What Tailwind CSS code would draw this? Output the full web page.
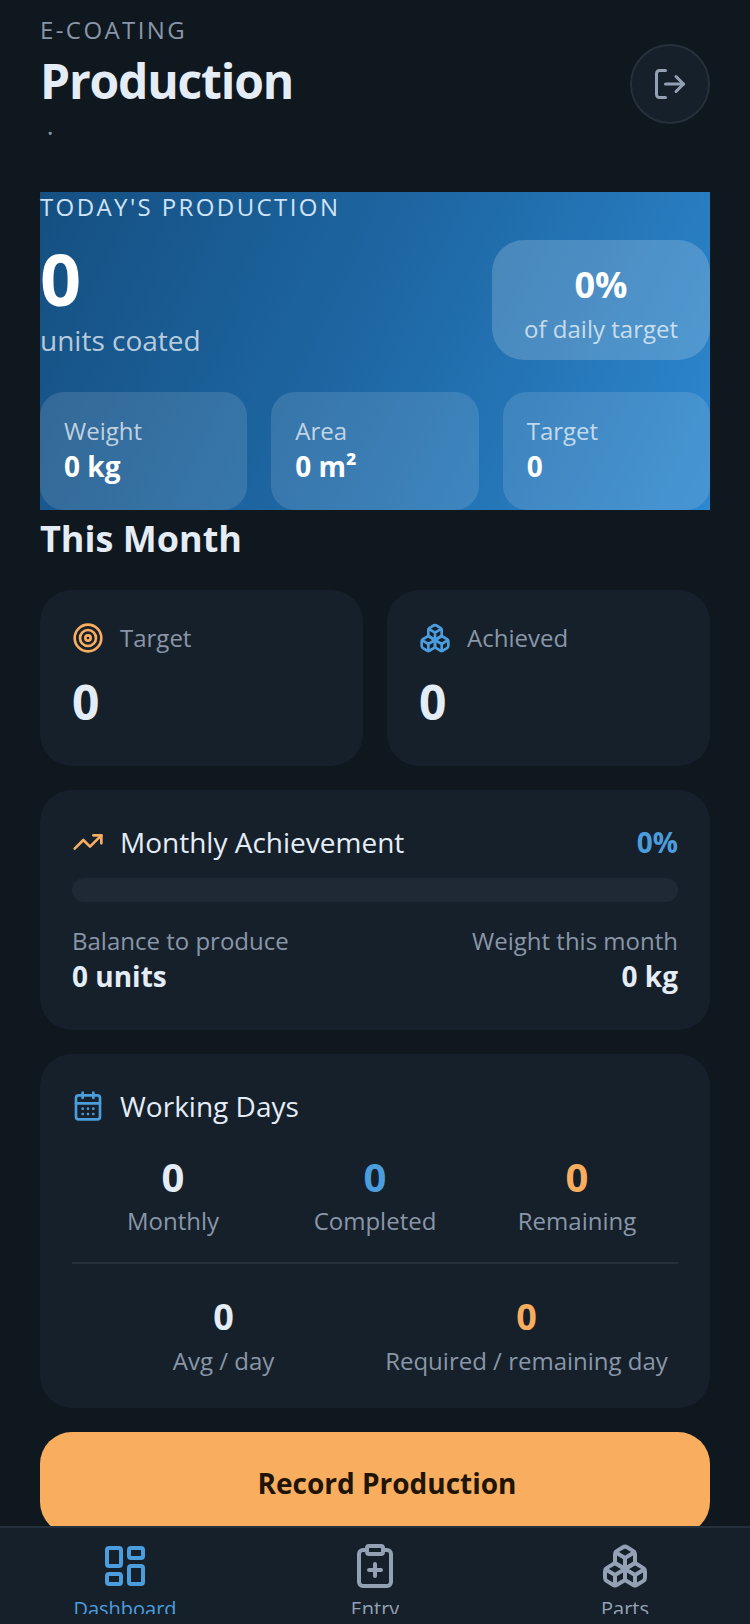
<!DOCTYPE html>
<html lang="en">
<head>
  <meta charset="UTF-8">
  <title>Production - E-Coating</title>
  <meta name="viewport" content="width=device-width, initial-scale=1.0">
  <script src="https://cdn.jsdelivr.net/npm/@tailwindcss/browser@4"></script>
</head>
<body class="bg-[#0f171f] text-[#e4ecf6] font-['Open_Sans','Noto_Sans',sans-serif]">

<!-- Shared icon -->
<svg class="hidden">
  <symbol id="icon-boxes" viewBox="0 0 24 24">
    <path d="M2.97 12.92A2 2 0 0 0 2 14.63v3.24a2 2 0 0 0 .97 1.71l3 1.8a2 2 0 0 0 2.06 0L12 19v-5.5l-5-3-4.03 2.42Z" />
    <path d="m7 16.5-4.74-2.85M7 16.5l5-3M7 16.5v5.17" />
    <path d="M12 13.5V19l3.97 2.38a2 2 0 0 0 2.06 0l3-1.8a2 2 0 0 0 .97-1.71v-3.24a2 2 0 0 0-.97-1.71L17 10.5l-5 3Z" />
    <path d="m17 16.5-5-3M17 16.5l4.74-2.85M17 16.5v5.17" />
    <path d="M7.97 4.42A2 2 0 0 0 7 6.13v4.37l5 3 5-3V6.13a2 2 0 0 0-.97-1.71l-3-1.8a2 2 0 0 0-2.06 0l-3 1.8Z" />
    <path d="M12 8 7.26 5.15M12 8l4.74-2.85M12 13.5V8" />
  </symbol>
</svg>

<div class="flex flex-col h-screen">

  <main class="flex-1 min-h-0 overflow-y-auto [scrollbar-width:none] px-10 pb-10">

    <!-- Header -->
    <header class="flex justify-between items-center pt-[14px] pb-[38px]">
      <div class="pb-[6px]">
        <p class="text-2xl leading-8 tracking-widest text-[#8996a7]">E-COATING</p>
        <h1 class="text-5xl leading-[70px] font-bold tracking-tight">Production</h1>
        <p class="text-[26px] leading-8 text-[#8996a7]">&nbsp;·</p>
      </div>
      <button type="button" aria-label="Log out" class="flex items-center justify-center w-20 h-20 rounded-full border-2 border-[#25303b] bg-[#16202b] text-[#94a1b4]">
        <svg class="w-9 h-9" fill="none" stroke="currentColor" stroke-width="2" stroke-linecap="round" stroke-linejoin="round" viewBox="0 0 24 24">
          <path d="m16 17 5-5-5-5" />
          <path d="M21 12H9" />
          <path d="M9 21H5a2 2 0 0 1-2-2V5a2 2 0 0 1 2-2h4" />
        </svg>
      </button>
    </header>

    <!-- Today's production -->
    <section class="bg-linear-115 from-[#154f81] via-[#1e68a5] to-[#2e88cf] text-white">
      <h2 class="text-2xl leading-[30px] tracking-widest text-[#cfe3f5]">TODAY'S PRODUCTION</h2>
      <div class="flex justify-between items-center mt-[18px]">
        <div>
          <p class="text-7xl leading-[76px] font-bold">0</p>
          <p class="mt-1 text-[28px] leading-10 text-white/70">units coated</p>
        </div>
        <div class="rounded-[32px] bg-white/18 px-8 py-4 text-center">
          <p class="text-4xl leading-[58px] font-bold">0%</p>
          <p class="text-2xl leading-[30px] text-white/70">of daily target</p>
        </div>
      </div>
      <div class="grid grid-cols-3 gap-6 mt-8">
        <div class="rounded-3xl bg-white/12 p-6">
          <p class="text-2xl leading-[30px] text-white/70">Weight</p>
          <p class="text-[28px] leading-10 font-bold">0 kg</p>
        </div>
        <div class="rounded-3xl bg-white/12 p-6">
          <p class="text-2xl leading-[30px] text-white/70">Area</p>
          <p class="text-[28px] leading-10 font-bold">0 m²</p>
        </div>
        <div class="rounded-3xl bg-white/12 p-6">
          <p class="text-2xl leading-[30px] text-white/70">Target</p>
          <p class="text-[28px] leading-10 font-bold">0</p>
        </div>
      </div>
    </section>

    <!-- This month -->
    <h2 class="text-4xl leading-[58px] font-bold">This Month</h2>

    <div class="grid grid-cols-2 gap-6 mt-[22px]">
      <section class="rounded-[32px] bg-[#16202b] p-8">
        <div class="flex items-center gap-4">
          <svg class="w-8 h-8 text-[#f8ad5f]" fill="none" stroke="currentColor" stroke-width="2" viewBox="0 0 24 24">
            <circle cx="12" cy="12" r="10" />
            <circle cx="12" cy="12" r="6" />
            <circle cx="12" cy="12" r="2" />
          </svg>
          <h3 class="text-2xl leading-8 text-[#8996a7]">Target</h3>
        </div>
        <p class="mt-4 text-5xl leading-[64px] font-bold">0</p>
      </section>
      <section class="rounded-[32px] bg-[#16202b] p-8">
        <div class="flex items-center gap-4">
          <svg class="w-8 h-8 text-[#4b9ddd]" fill="none" stroke="currentColor" stroke-width="2" stroke-linecap="round" stroke-linejoin="round">
            <use href="#icon-boxes" />
          </svg>
          <h3 class="text-2xl leading-8 text-[#8996a7]">Achieved</h3>
        </div>
        <p class="mt-4 text-5xl leading-[64px] font-bold">0</p>
      </section>
    </div>

    <!-- Monthly achievement -->
    <section class="mt-6 rounded-[32px] bg-[#16202b] p-8">
      <div class="flex items-center gap-4">
        <svg class="w-8 h-8 text-[#f8ad5f]" fill="none" stroke="currentColor" stroke-width="2" stroke-linecap="round" stroke-linejoin="round" viewBox="0 0 24 24">
          <path d="M16 7h6v6" />
          <path d="m22 7-8.5 8.5-5-5L2 17" />
        </svg>
        <h3 class="flex-1 text-[28px] leading-10">Monthly Achievement</h3>
        <span class="text-[28px] leading-10 font-bold text-[#4b9ddd]">0%</span>
      </div>
      <div class="mt-4 h-6 rounded-full bg-[#1e2935] overflow-hidden">
        <div class="h-full bg-[#4b9ddd]" style="width: 0%"></div>
      </div>
      <div class="flex justify-between mt-6 pb-[2px]">
        <div>
          <p class="text-2xl leading-[30px] text-[#8996a7]">Balance to produce</p>
          <p class="text-[28px] leading-10 font-bold">0 units</p>
        </div>
        <div class="text-right">
          <p class="text-2xl leading-[30px] text-[#8996a7]">Weight this month</p>
          <p class="text-[28px] leading-10 font-bold">0 kg</p>
        </div>
      </div>
    </section>

    <!-- Working days -->
    <section class="mt-6 rounded-[32px] bg-[#16202b] p-8">
      <div class="flex items-center gap-4">
        <svg class="w-8 h-8 text-[#4b9ddd]" fill="none" stroke="currentColor" stroke-width="2" stroke-linecap="round" stroke-linejoin="round" viewBox="0 0 24 24">
          <path d="M8 2v4M16 2v4" />
          <rect width="18" height="18" x="3" y="4" rx="2" />
          <path d="M3 10h18" />
          <path d="M8 14h.01M12 14h.01M16 14h.01M8 18h.01M12 18h.01M16 18h.01" />
        </svg>
        <h3 class="text-[28px] leading-10">Working Days</h3>
      </div>
      <div class="grid grid-cols-3 mt-6 pb-6 text-center">
        <div>
          <p class="text-[40px] leading-[54px] font-bold">0</p>
          <p class="text-2xl leading-[34px] text-[#8996a7]">Monthly</p>
        </div>
        <div>
          <p class="text-[40px] leading-[54px] font-bold text-[#4b9ddd]">0</p>
          <p class="text-2xl leading-[34px] text-[#8996a7]">Completed</p>
        </div>
        <div>
          <p class="text-[40px] leading-[54px] font-bold text-[#f8ad5f]">0</p>
          <p class="text-2xl leading-[34px] text-[#8996a7]">Remaining</p>
        </div>
      </div>
      <div class="grid grid-cols-2 border-t-2 border-[#25303b] pt-6 text-center">
        <div>
          <p class="text-4xl leading-[58px] font-bold">0</p>
          <p class="text-2xl leading-[30px] text-[#8996a7]">Avg / day</p>
        </div>
        <div>
          <p class="text-4xl leading-[58px] font-bold text-[#f8ad5f]">0</p>
          <p class="text-2xl leading-[30px] text-[#8996a7]">Required / remaining day</p>
        </div>
      </div>
    </section>

    <button type="button" class="mt-6 w-full rounded-[32px] bg-[#f8ad5f] py-8 pl-6 text-[28px] leading-[38px] font-bold text-[#201405]">Record Production</button>
  </main>

  <!-- Bottom tabs -->
  <nav class="grid grid-cols-3 border-t-2 border-[#25303b] bg-[#16202b] pt-[14px] pb-[10px] text-xl leading-[30px] text-[#94a1b4]">
    <a href="#" class="flex flex-col items-center text-[#4b9ddd]">
      <svg class="w-12 h-12" fill="none" stroke="currentColor" stroke-width="2" stroke-linecap="round" stroke-linejoin="round" viewBox="0 0 24 24">
        <rect width="7" height="9" x="3" y="3" rx="1" />
        <rect width="7" height="5" x="14" y="3" rx="1" />
        <rect width="7" height="9" x="14" y="12" rx="1" />
        <rect width="7" height="5" x="3" y="16" rx="1" />
      </svg>
      <span class="mt-1 h-5 overflow-hidden">Dashboard</span>
    </a>
    <a href="#" class="flex flex-col items-center">
      <svg class="w-12 h-12" fill="none" stroke="currentColor" stroke-width="2" stroke-linecap="round" stroke-linejoin="round" viewBox="0 0 24 24">
        <rect width="8" height="4" x="8" y="2" rx="1" />
        <path d="M16 4h2a2 2 0 0 1 2 2v14a2 2 0 0 1-2 2H6a2 2 0 0 1-2-2V6a2 2 0 0 1 2-2h2" />
        <path d="M9 14h6M12 17v-6" />
      </svg>
      <span class="mt-1 h-5 overflow-hidden">Entry</span>
    </a>
    <a href="#" class="flex flex-col items-center">
      <svg class="w-12 h-12" fill="none" stroke="currentColor" stroke-width="2" stroke-linecap="round" stroke-linejoin="round">
        <use href="#icon-boxes" />
      </svg>
      <span class="mt-1 h-5 overflow-hidden">Parts</span>
    </a>
  </nav>
</div>

</body>
</html>
